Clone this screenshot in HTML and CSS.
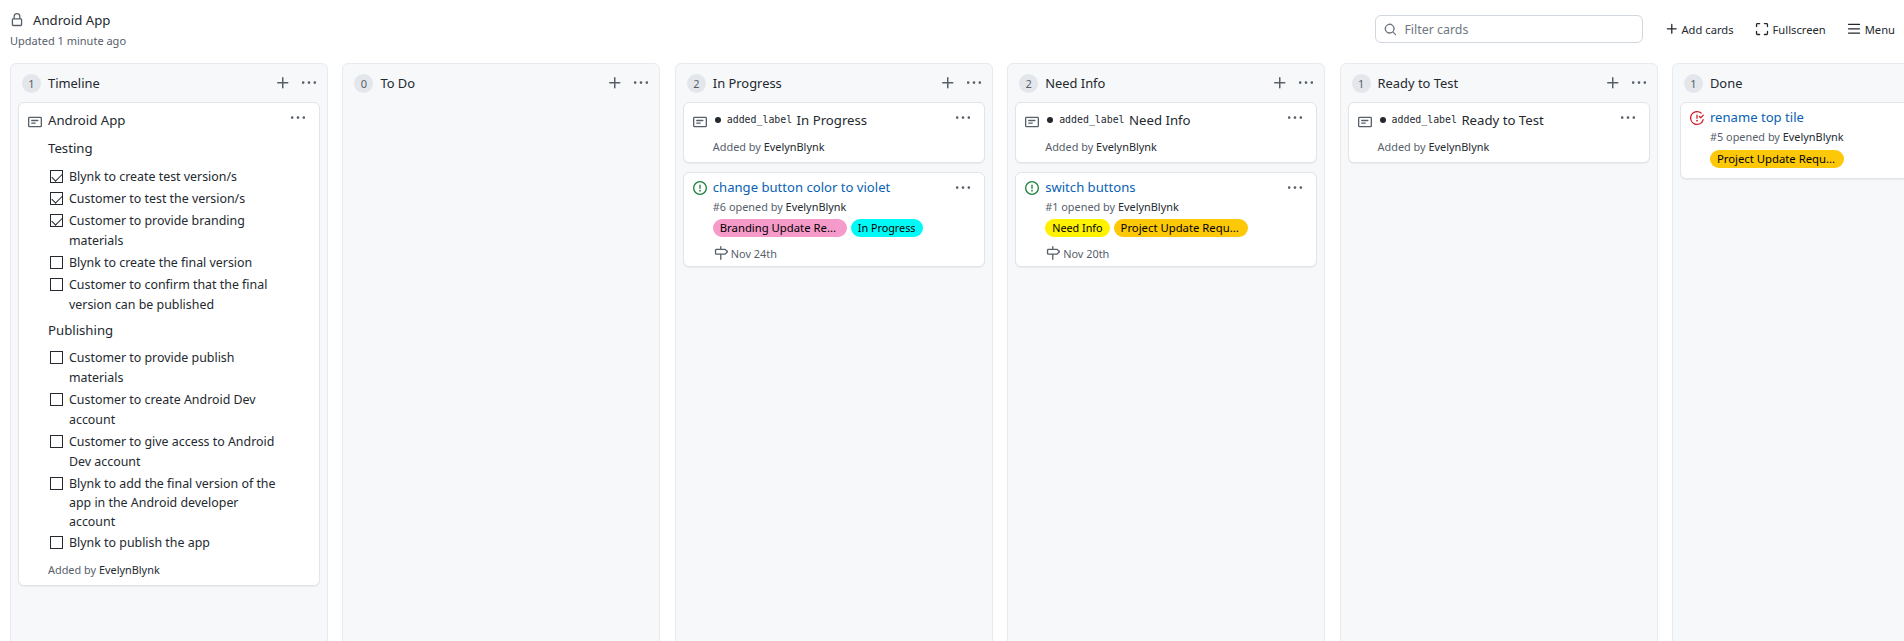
FILE: index.html
```html
<!DOCTYPE html>
<html lang="en">
<head>
<meta charset="utf-8">
<title>Android App</title>
<link rel="stylesheet" href="styles.css">
</head>
<body>
<svg class="defs" width="0" height="0">
  <symbol id="i-note" viewBox="0 0 16 16"><path fill="currentColor" d="M0 3.75C0 2.784.784 2 1.75 2h12.5c.966 0 1.75.784 1.75 1.75v8.5A1.75 1.75 0 0 1 14.25 14H1.75A1.75 1.75 0 0 1 0 12.25Zm1.75-.25a.25.25 0 0 0-.25.25v8.5c0 .138.112.25.25.25h12.5a.25.25 0 0 0 .25-.25v-8.5a.25.25 0 0 0-.25-.25ZM3.5 6.25a.75.75 0 0 1 .75-.75h7a.75.75 0 0 1 0 1.5h-7a.75.75 0 0 1-.75-.75Zm.75 2.25h4a.75.75 0 0 1 0 1.5h-4a.75.75 0 0 1 0-1.5Z"/></symbol>
  <symbol id="i-plus" viewBox="0 0 16 16"><path fill="currentColor" d="M7.75 2a.75.75 0 0 1 .75.75V7h4.25a.75.75 0 0 1 0 1.5H8.5v4.25a.75.75 0 0 1-1.5 0V8.5H2.75a.75.75 0 0 1 0-1.5H7V2.75A.75.75 0 0 1 7.75 2Z"/></symbol>
  <symbol id="i-dots" viewBox="0 0 16 16"><path fill="currentColor" d="M8 9a1.5 1.5 0 1 0 0-3 1.5 1.5 0 0 0 0 3ZM1.5 9a1.5 1.5 0 1 0 0-3 1.5 1.5 0 0 0 0 3Zm13 0a1.5 1.5 0 1 0 0-3 1.5 1.5 0 0 0 0 3Z"/></symbol>
  <symbol id="i-issue" viewBox="0 0 16 16"><path fill="currentColor" fill-rule="evenodd" d="M8 1.5a6.5 6.5 0 100 13 6.5 6.5 0 000-13zM0 8a8 8 0 1116 0A8 8 0 010 8zm9 3a1 1 0 11-2 0 1 1 0 012 0zm-.25-6.25a.75.75 0 00-1.5 0v3.5a.75.75 0 001.5 0v-3.5z"/></symbol>
  <symbol id="i-closed" viewBox="0 0 16 16"><path fill="currentColor" fill-rule="evenodd" d="M1.5 8a6.5 6.5 0 0110.65-5.003.75.75 0 00.959-1.153 8 8 0 102.592 8.33.75.75 0 10-1.444-.407A6.5 6.5 0 011.5 8zM8 12a1 1 0 100-2 1 1 0 000 2zm0-8a.75.75 0 01.75.75v3.5a.75.75 0 11-1.5 0v-3.5A.75.75 0 018 4zm4.78 4.28l3-3a.75.75 0 00-1.06-1.06l-2.47 2.47-.97-.97a.749.749 0 10-1.06 1.06l1.5 1.5a.75.75 0 001.06 0z"/></symbol>
  <symbol id="i-milestone" viewBox="0 0 16 16"><path fill="currentColor" d="M7.75 0a.75.75 0 0 1 .75.75V3h3.634c.414 0 .814.147 1.13.414l2.07 1.75a1.75 1.75 0 0 1 0 2.672l-2.07 1.75a1.75 1.75 0 0 1-1.13.414H8.5v5.25a.75.75 0 0 1-1.5 0V10H2.75A1.75 1.75 0 0 1 1 8.25v-3.5C1 3.784 1.784 3 2.75 3H7V.75A.75.75 0 0 1 7.75 0Zm4.384 8.5a.25.25 0 0 0 .161-.06l2.07-1.75a.248.248 0 0 0 0-.38l-2.07-1.75a.25.25 0 0 0-.161-.06H2.75a.25.25 0 0 0-.25.25v3.5c0 .138.112.25.25.25h9.384Z"/></symbol>
</svg>

<header class="top">
  <div class="project">
    <div class="project-title">
      <svg class="lock" viewBox="0 0 16 16"><path fill="currentColor" d="M4 4a4 4 0 0 1 8 0v2h.25c.966 0 1.75.784 1.75 1.75v5.5A1.75 1.75 0 0 1 12.25 15h-8.5A1.75 1.75 0 0 1 2 13.25v-5.5C2 6.784 2.784 6 3.75 6H4Zm6.5 2V4a2.5 2.5 0 1 0-5 0v2Zm-6.75 1.5a.25.25 0 0 0-.25.25v5.5c0 .138.112.25.25.25h8.5a.25.25 0 0 0 .25-.25v-5.5a.25.25 0 0 0-.25-.25Z"/></svg>
      <span>Android App</span>
    </div>
    <div class="updated">Updated 1 minute ago</div>
  </div>
  <div class="tools">
    <div class="filter">
      <svg class="search" viewBox="0 0 16 16"><path fill="currentColor" d="M10.68 11.74a6 6 0 0 1-7.922-8.982 6 6 0 0 1 8.982 7.922l3.04 3.04a.749.749 0 1 1-1.06 1.06ZM11.5 7a4.499 4.499 0 1 0-8.997 0A4.499 4.499 0 0 0 11.5 7Z"/></svg>
      <span>Filter cards</span>
    </div>
    <div class="tool tool-add"><svg class="ti"><use href="#i-plus"/></svg>Add cards</div>
    <div class="tool tool-full"><svg class="ti" viewBox="0 0 16 16"><path fill="currentColor" d="M1.75 10a.75.75 0 0 1 .75.75v2.5c0 .138.112.25.25.25h2.5a.75.75 0 0 1 0 1.5h-2.5A1.75 1.75 0 0 1 1 13.25v-2.5a.75.75 0 0 1 .75-.75Zm12.5 0a.75.75 0 0 1 .75.75v2.5A1.75 1.75 0 0 1 13.25 15h-2.5a.75.75 0 0 1 0-1.5h2.5a.25.25 0 0 0 .25-.25v-2.5a.75.75 0 0 1 .75-.75ZM2.75 2.5a.25.25 0 0 0-.25.25v2.5a.75.75 0 0 1-1.5 0v-2.5C1 1.784 1.784 1 2.75 1h2.5a.75.75 0 0 1 0 1.5ZM10 1.75a.75.75 0 0 1 .75-.75h2.5c.966 0 1.75.784 1.75 1.75v2.5a.75.75 0 0 1-1.5 0v-2.5a.25.25 0 0 0-.25-.25h-2.5a.75.75 0 0 1-.75-.75Z"/></svg>Fullscreen</div>
    <div class="tool"><svg class="ti" viewBox="0 0 16 16"><path fill="currentColor" d="M1 2.75A.75.75 0 0 1 1.75 2h12.5a.75.75 0 0 1 0 1.5H1.75A.75.75 0 0 1 1 2.75Zm0 5A.75.75 0 0 1 1.75 7h12.5a.75.75 0 0 1 0 1.5H1.75A.75.75 0 0 1 1 7.75ZM1.75 12h12.5a.75.75 0 0 1 0 1.5H1.75a.75.75 0 0 1 0-1.5Z"/></svg>Menu</div>
  </div>
</header>

<main class="board">
  <section class="col">
    <div class="col-head"><span class="count">1</span><h2>Timeline</h2><svg class="add"><use href="#i-plus"/></svg><svg class="dots"><use href="#i-dots"/></svg></div>
    <article class="card note-card">
      <svg class="card-dots"><use href="#i-dots"/></svg>
      <svg class="card-icon"><use href="#i-note"/></svg>
      <div class="card-body">
        <div class="note-title">Android App</div>
        <h3 class="sub sub-testing">Testing</h3>
        <ul class="checks">
          <li class="on"><span class="box"></span>Blynk to create test version/s</li>
          <li class="on"><span class="box"></span>Customer to test the version/s</li>
          <li class="on"><span class="box"></span>Customer to provide branding materials</li>
          <li><span class="box"></span>Blynk to create the final version</li>
          <li><span class="box"></span>Customer to confirm that the final version can be published</li>
        </ul>
        <h3 class="sub sub-publishing">Publishing</h3>
        <ul class="checks">
          <li><span class="box"></span>Customer to provide publish materials</li>
          <li><span class="box"></span>Customer to create Android Dev account</li>
          <li><span class="box"></span>Customer to give access to Android Dev account</li>
          <li class="tight"><span class="box"></span>Blynk to add the final version of the app in the Android developer account</li>
          <li><span class="box"></span>Blynk to publish the app</li>
        </ul>
        <div class="meta added">Added by <b>EvelynBlynk</b></div>
      </div>
    </article>
  </section>

  <section class="col">
    <div class="col-head"><span class="count">0</span><h2>To Do</h2><svg class="add"><use href="#i-plus"/></svg><svg class="dots"><use href="#i-dots"/></svg></div>
  </section>

  <section class="col">
    <div class="col-head"><span class="count">2</span><h2>In Progress</h2><svg class="add"><use href="#i-plus"/></svg><svg class="dots"><use href="#i-dots"/></svg></div>
    <article class="card note-card">
      <svg class="card-dots"><use href="#i-dots"/></svg>
      <svg class="card-icon"><use href="#i-note"/></svg>
      <div class="card-body">
        <div class="note-title"><span class="dot"></span><code>added_label</code> In Progress</div>
        <div class="meta added-short">Added by <b>EvelynBlynk</b></div>
      </div>
    </article>
    <article class="card issue-card">
      <svg class="card-dots"><use href="#i-dots"/></svg>
      <svg class="card-icon open"><use href="#i-issue"/></svg>
      <div class="card-body">
        <a class="issue-title">change button color to violet</a>
        <div class="meta">#6 opened by <b>EvelynBlynk</b></div>
        <div class="labels"><span class="label pink">Branding Update Re...</span><span class="label cyan">In Progress</span></div>
        <div class="due"><svg class="mile"><use href="#i-milestone"/></svg>Nov 24th</div>
      </div>
    </article>
  </section>

  <section class="col">
    <div class="col-head"><span class="count">2</span><h2>Need Info</h2><svg class="add"><use href="#i-plus"/></svg><svg class="dots"><use href="#i-dots"/></svg></div>
    <article class="card note-card">
      <svg class="card-dots"><use href="#i-dots"/></svg>
      <svg class="card-icon"><use href="#i-note"/></svg>
      <div class="card-body">
        <div class="note-title"><span class="dot"></span><code>added_label</code> Need Info</div>
        <div class="meta added-short">Added by <b>EvelynBlynk</b></div>
      </div>
    </article>
    <article class="card issue-card">
      <svg class="card-dots"><use href="#i-dots"/></svg>
      <svg class="card-icon open"><use href="#i-issue"/></svg>
      <div class="card-body">
        <a class="issue-title">switch buttons</a>
        <div class="meta">#1 opened by <b>EvelynBlynk</b></div>
        <div class="labels"><span class="label yellow">Need Info</span><span class="label amber">Project Update Requ...</span></div>
        <div class="due"><svg class="mile"><use href="#i-milestone"/></svg>Nov 20th</div>
      </div>
    </article>
  </section>

  <section class="col">
    <div class="col-head"><span class="count">1</span><h2>Ready to Test</h2><svg class="add"><use href="#i-plus"/></svg><svg class="dots"><use href="#i-dots"/></svg></div>
    <article class="card note-card">
      <svg class="card-dots"><use href="#i-dots"/></svg>
      <svg class="card-icon"><use href="#i-note"/></svg>
      <div class="card-body">
        <div class="note-title"><span class="dot"></span><code>added_label</code> Ready to Test</div>
        <div class="meta added-short">Added by <b>EvelynBlynk</b></div>
      </div>
    </article>
  </section>

  <section class="col">
    <div class="col-head"><span class="count">1</span><h2>Done</h2><svg class="add"><use href="#i-plus"/></svg><svg class="dots"><use href="#i-dots"/></svg></div>
    <article class="card issue-card done-card">
      <svg class="card-icon closed"><use href="#i-closed"/></svg>
      <div class="card-body">
        <a class="issue-title">rename top tile</a>
        <div class="meta">#5 opened by <b>EvelynBlynk</b></div>
        <div class="labels"><span class="label amber">Project Update Requ...</span></div>
      </div>
    </article>
  </section>
</main>
</body>
</html>
```

FILE: styles.css
```css
* { box-sizing: border-box; }
html, body { height: 100%; }
body {
  margin: 0;
  width: 1904px;
  height: 641px;
  overflow: hidden;
  background: #fff;
  color: #24292f;
  font-family: "Noto Sans", sans-serif;
  font-size: 13.2px;
}
.defs { position: absolute; }
svg { display: block; flex: none; }

.top {
  height: 63px;
  display: flex;
  justify-content: space-between;
  padding: 12px 9px 0 10px;
}
.project-title {
  display: flex;
  align-items: center;
  height: 16px;
  font-size: 13.2px;
  line-height: 16px;
}
.lock { width: 14px; height: 14px; margin-right: 9px; color: #57606a; margin-top: -1px; }
.updated { margin-top: 5px; font-size: 11px; line-height: 16px; color: #57606a; }

.tools { display: flex; align-items: flex-start; }
.filter {
  width: 268px;
  height: 28px;
  margin-top: 3px;
  margin-right: 22px;
  border: 1px solid #d0d7de;
  border-radius: 6px;
  display: flex;
  align-items: center;
  padding-left: 8px;
  color: #6e7781;
  font-size: 12.4px;
}
.search { width: 13px; height: 13px; margin-right: 7px; color: #6e7781; }
.tool {
  display: flex;
  align-items: center;
  height: 16px;
  margin-top: 9px;
  font-size: 11.2px;
  color: #24292f;
}
.tool-add, .tool-full { margin-right: 21px; }
.ti { width: 14px; height: 14px; margin-right: 4px; color: #24292f; }
.tool-add .ti { margin-right: 2px; }

.board {
  display: flex;
  gap: 14.4px;
  padding-left: 10px;
  height: 578px;
}
.col {
  flex: 0 0 318px;
  height: 600px;
  background: #f6f8fa;
  border: 1px solid #e7ebef;
  border-radius: 6px;
  padding: 0 7px;
}
.col-head {
  height: 38px;
  display: flex;
  align-items: center;
  padding: 0 2px 0 4px;
}
.count {
  width: 19px;
  height: 19px;
  border-radius: 50%;
  background: #e3e7eb;
  color: #57606a;
  font-size: 11px;
  line-height: 19px;
  text-align: center;
  margin-right: 7px;
}
.col-head h2 { margin: 0; font-size: 12.9px; font-weight: 400; flex: 1; line-height: 20px; }
.add { width: 16px; height: 16px; color: #57606a; margin-right: 10px; }
.dots { width: 16px; height: 16px; color: #57606a; margin-right: 1px; transform: scale(.9); }

.card {
  position: relative;
  display: flex;
  width: 302px;
  background: #fff;
  border: 1px solid #e1e4e8;
  border-radius: 6px;
  box-shadow: 0 1px 1px rgba(27, 31, 36, .06);
  margin-bottom: 9px;
  padding: 8px 8px 0 9px;
}
.card-icon { width: 14px; height: 14px; margin-top: 4px; color: #57606a; margin-right: 6px; }
.card-body { flex: 1; min-width: 0; }
.card-dots { position: absolute; top: 7px; right: 13px; width: 16px; height: 16px; color: #57606a; transform: scale(.9); }

.note-title { font-size: 13.2px; line-height: 20px; margin-top: -1px; display: flex; align-items: center; white-space: pre; }
.dot { width: 6px; height: 6px; border-radius: 50%; background: #24292f; margin-right: 6px; margin-left: 2px; }
code { font-family: "DejaVu Sans Mono", monospace; font-size: 9.9px; margin-right: 1px; }

.sub { margin: 0; font-size: 13.2px; font-weight: 400; line-height: 20px; }
.sub-testing { margin-top: 8px; }
.sub-publishing { margin-top: 5px; }
.checks { list-style: none; margin: 9px 0 0; padding: 0 0 0 21px; font-size: 12.4px; line-height: 20px; color: #24292f; }
.checks li { position: relative; margin-bottom: 2px; width: 212px; }
.sub-publishing + .checks { margin-top: 8px; }
.checks li.tight { line-height: 19px; }
.checks li .box {
  position: absolute;
  left: -19px;
  top: 3px;
  width: 13px;
  height: 13px;
  background: #fff;
  border: 1px solid #24292f;
}
.on .box::after {
  content: "";
  position: absolute;
  left: 3px;
  top: 0;
  width: 5px;
  height: 9px;
  border: solid #24292f;
  border-width: 0 1px 1px 0;
  transform: rotate(45deg);
}
.meta { font-size: 10.9px; line-height: 16px; color: #57606a; }
.meta b { font-weight: 400; color: #24292f; }
.added { margin-top: 9px; padding-bottom: 7px; }
.added-short { margin-top: 9px; padding-bottom: 7px; }

.issue-title { display: block; color: #0a5fb4; font-size: 13.1px; line-height: 20px; margin-top: -1px; }
.issue-card .meta { margin-top: 2px; }
.labels { display: flex; gap: 4px; margin-top: 4px; height: 18px; }
.label {
  height: 18px;
  line-height: 18px;
  border-radius: 9px;
  padding: 0 7px;
  font-size: 11.3px;
  color: #000;
  white-space: nowrap;
}
.pink { background: #f59ac9; width: 134px; }
.cyan { background: #00fbf6; font-size: 10.8px; }
.yellow { background: #fff200; font-size: 10.8px; }
.amber { background: #fcc808; width: 134px; }
.due { display: flex; align-items: center; margin-top: 8px; height: 16px; font-size: 10.9px; color: #57606a; margin-bottom: 5px; }
.mile { width: 14px; height: 14px; margin-right: 3px; margin-left: 1px; color: #57606a; }
.issue-card { padding-top: 5px; }
.issue-card .card-icon { margin-top: 3px; }
.open { color: #1a7f37 !important; }
.closed { color: #cf222e !important; }
.done-card { padding-bottom: 10px; }
.done-card .labels { margin-top: 5px; }
.col:last-child .add, .col:last-child .dots { visibility: hidden; }
```
